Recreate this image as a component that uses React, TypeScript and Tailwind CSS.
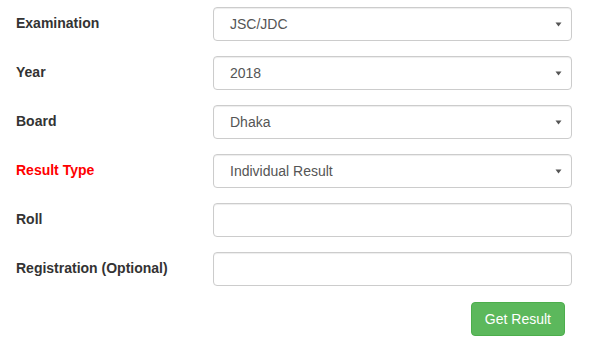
import React from "react";

function Caret() {
  return (
    <svg width="7" height="5" viewBox="0 0 7 5" className="shrink-0 mr-[1px]">
      <path d="M0.5 0.5 H6.5 L3.5 4.5 Z" fill="#555" />
    </svg>
  );
}

function Row({ label, red, value, select }: { label: string; red?: boolean; value?: string; select?: boolean }) {
  return (
    <div className="flex items-start">
      <div className={`w-[197px] pt-[6px] text-[14px] leading-[20px] font-bold ${red ? "text-[#ff0000]" : "text-[#333]"}`}>
        {label}
      </div>
      <div className="w-[359px] h-[34px] border border-[#ccc] rounded-[4px] bg-white flex items-center pl-[16px] pr-[8px] shadow-[inset_0_1px_1px_rgba(0,0,0,0.075)]">
        <span className="flex-1 text-[14px] leading-[20px] text-[#555]">{value}</span>
        {select && <Caret />}
      </div>
    </div>
  );
}

export default function App() {
  return (
    <div className="w-[591px] h-[348px] bg-white pl-[16px] pt-[7px] font-['Liberation_Sans',Arial,sans-serif]">
      <div className="flex flex-col gap-[15px]">
        <Row label="Examination" value="JSC/JDC" select />
        <Row label="Year" value="2018" select />
        <Row label="Board" value="Dhaka" select />
        <Row label="Result Type" red value="Individual Result" select />
        <Row label="Roll" />
        <Row label="Registration (Optional)" />
      </div>
      <div className="flex justify-end w-[549px] mt-[16px]">
        <button className="h-[34px] px-[13px] bg-[#5cb85c] border border-[#4cae4c] rounded-[4px] text-white text-[14px] leading-[20px]">
          Get Result
        </button>
      </div>
    </div>
  );
}
